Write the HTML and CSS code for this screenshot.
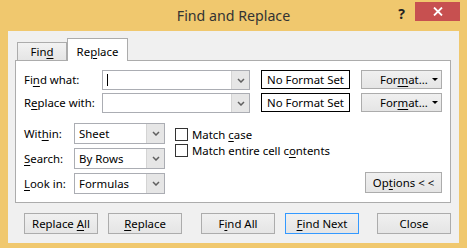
FILE: index.html
```html
<!DOCTYPE html>
<html>
<head>
    <title>Find and Replace</title>
    <link rel="stylesheet" href="styles.css">
</head>
<body>
    <div class="window">
        <div class="titlebar">
            <span class="title">Find and Replace</span>
            <div class="controls">
                <span class="help">?</span>
                <span class="close">
                    <svg width="10" height="9" viewBox="0 0 10 9"><path d="M1 0.5 L9 8.5 M9 0.5 L1 8.5" stroke="#fff" stroke-width="1.8" fill="none"/></svg>
                </span>
            </div>
        </div>

        <div class="client">
            <div class="tabs">
                <div class="tab">Fin<u>d</u></div>
                <div class="tab active">Re<u>p</u>lace</div>
            </div>

            <div class="panel">
                <div class="row">
                    <label class="field-label">Fi<u>n</u>d what:</label>
                    <div class="combo">
                        <span class="text"><span class="caret"></span></span>
                        <span class="drop"><svg width="8" height="5" viewBox="0 0 8 5"><path d="M1 1 L4 4 L7 1" stroke="#606060" stroke-width="1.5" fill="none"/></svg></span>
                    </div>
                    <div class="format-set">No Format Set</div>
                    <button class="btn format"><span>For<u>m</u>at...</span> <span class="tri"></span></button>
                </div>
                <div class="row">
                    <label class="field-label">R<u>e</u>place with:</label>
                    <div class="combo">
                        <span class="text"></span>
                        <span class="drop"><svg width="8" height="5" viewBox="0 0 8 5"><path d="M1 1 L4 4 L7 1" stroke="#606060" stroke-width="1.5" fill="none"/></svg></span>
                    </div>
                    <div class="format-set">No Format Set</div>
                    <button class="btn format"><span>For<u>m</u>at...</span> <span class="tri"></span></button>
                </div>

                <div class="options">
                    <div class="selects">
                        <label class="field-label">Wit<u>h</u>in:</label>
                        <div class="select"><span class="text">Sheet</span><span class="drop"><svg width="8" height="5" viewBox="0 0 8 5"><path d="M1 1 L4 4 L7 1" stroke="#606060" stroke-width="1.5" fill="none"/></svg></span></div>
                        <label class="field-label"><u>S</u>earch:</label>
                        <div class="select"><span class="text">By Rows</span><span class="drop"><svg width="8" height="5" viewBox="0 0 8 5"><path d="M1 1 L4 4 L7 1" stroke="#606060" stroke-width="1.5" fill="none"/></svg></span></div>
                        <label class="field-label"><u>L</u>ook in:</label>
                        <div class="select"><span class="text">Formulas</span><span class="drop"><svg width="8" height="5" viewBox="0 0 8 5"><path d="M1 1 L4 4 L7 1" stroke="#606060" stroke-width="1.5" fill="none"/></svg></span></div>
                    </div>

                    <div class="checks">
                        <div class="check"><span class="box"></span><span>Match <u>c</u>ase</span></div>
                        <div class="check"><span class="box"></span><span>Match entire cell c<u>o</u>ntents</span></div>
                    </div>

                    <button class="btn options-btn">Op<u>t</u>ions &lt; &lt;</button>
                </div>
            </div>

            <div class="actions">
                <button class="btn action">Replace <u>A</u>ll</button>
                <button class="btn action"><u>R</u>eplace</button>
                <button class="btn action gap-wide">F<u>i</u>nd All</button>
                <button class="btn action default"><u>F</u>ind Next</button>
                <button class="btn action gap-wide">Close</button>
            </div>
        </div>
    </div>
</body>
</html>
```

FILE: styles.css
```css
body {
    margin: 0;
    background-color: #f0c86e;
    font-family: "Noto Sans", sans-serif;
    font-size: 11.4px;
    color: #000;
}
.window {
    width: 467px;
    height: 248px;
    display: flex;
    flex-direction: column;
}
.titlebar {
    height: 31px;
    display: grid;
    grid-template-columns: 1fr auto 1fr;
    align-items: start;
}
.title {
    grid-column: 2;
    font-size: 14.2px;
    line-height: 31px;
    color: #333;
}
.controls {
    grid-column: 3;
    justify-self: end;
    display: flex;
    align-items: flex-start;
    padding-right: 7px;
}
.help {
    font-weight: bold;
    font-size: 14px;
    line-height: 14px;
    color: #222;
    margin-top: 7px;
    margin-right: 10px;
}
.close {
    width: 45px;
    height: 19px;
    margin-top: 2px;
    background-color: #c75050;
    display: flex;
    align-items: center;
    justify-content: center;
}
.client {
    margin: 0 8px;
    height: 212px;
    box-sizing: border-box;
    padding: 0 8px 0 7px;
    background-color: #f0f0f0;
}
.tabs {
    height: 29px;
    display: flex;
    align-items: flex-end;
    padding-left: 2px;
}
.tab {
    box-sizing: border-box;
    width: 50px;
    height: 18px;
    border: 1px solid #acacac;
    border-bottom: none;
    background: linear-gradient(#f2f2f2, #e5e5e5);
    text-align: center;
    line-height: 17px;
}
.tab.active {
    width: 61px;
    height: 23px;
    margin-bottom: -1px;
    padding-top: 4px;
    background: #fff;
    position: relative;
    z-index: 1;
}
u {
    text-underline-offset: 2px;
}
.panel {
    box-sizing: border-box;
    height: 143px;
    border: 1px solid #acacac;
    background-color: #fff;
    padding: 9px 8px 0 8px;
}
.row {
    display: flex;
    align-items: flex-start;
    height: 20px;
}
.row + .row {
    margin-top: 3px;
}
.row .field-label {
    width: 78px;
    line-height: 20px;
}
.combo, .select {
    box-sizing: border-box;
    display: flex;
    border: 1px solid #abadb3;
    background-color: #fff;
}
.combo {
    width: 148px;
    height: 20px;
}
.select {
    width: 91px;
    height: 21px;
}
.combo .text, .select .text {
    flex: 1;
    display: flex;
    align-items: center;
    padding-left: 4px;
}
.caret {
    width: 1px;
    height: 12px;
    background-color: #000;
}
.drop {
    width: 17px;
    display: flex;
    align-items: center;
    justify-content: center;
    background-color: #e6e6e6;
    border-left: 1px solid #d4d4d4;
}
.format-set {
    box-sizing: border-box;
    width: 89px;
    height: 19px;
    margin-left: 11px;
    border: 1px solid #000;
    text-align: center;
    line-height: 17px;
}
.btn {
    box-sizing: border-box;
    flex-shrink: 0;
    border: 1px solid #acacac;
    background: linear-gradient(#f0f0f0, #e5e5e5);
    font-family: "Noto Sans", sans-serif;
    font-size: 11.4px;
    color: #000;
    padding: 0;
}
.format {
    width: 81px;
    height: 19px;
    margin-left: 11px;
    display: flex;
    align-items: center;
    padding-left: 18px;
    padding-right: 3px;
}
.tri {
    margin-left: auto;
    border-left: 3px solid transparent;
    border-right: 3px solid transparent;
    border-top: 3px solid #000;
}
.options {
    display: flex;
    align-items: flex-end;
    margin-top: 10px;
}
.selects {
    display: grid;
    grid-template-columns: 50px 91px;
    grid-auto-rows: 21px;
    row-gap: 4px;
    align-items: center;
}
.checks {
    align-self: flex-start;
    margin-left: 10px;
    padding-top: 3px;
}
.check {
    display: flex;
    align-items: center;
    height: 16px;
}
.box {
    box-sizing: border-box;
    width: 13px;
    height: 13px;
    border: 1px solid #333;
    background-color: #fff;
    margin-right: 4px;
}
.options-btn {
    margin-left: auto;
    margin-bottom: 1px;
    width: 77px;
    height: 21px;
}
.actions {
    display: flex;
    margin-top: 10px;
    padding-left: 9px;
}
.action {
    width: 74px;
    height: 21px;
    margin-right: 10px;
}
.action.gap-wide {
    margin-left: 9px;
}
.action.default {
    border-color: #3399ff;
    margin-right: 9px;
}
```
